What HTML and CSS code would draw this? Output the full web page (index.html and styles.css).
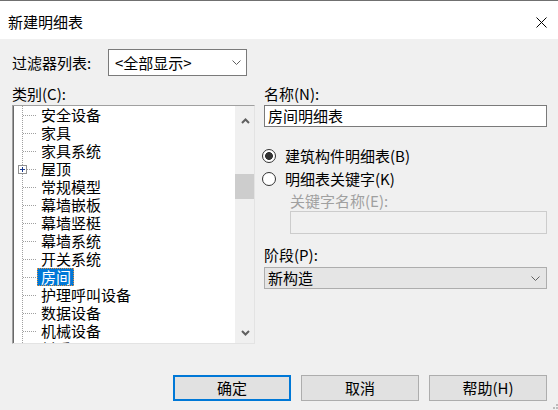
FILE: index.html
```html
<!DOCTYPE html>
<html lang="zh-CN">
<head>
<meta charset="utf-8">
<title>新建明细表</title>
<link rel="stylesheet" href="styles.css">
</head>
<body>
<div class="dialog">
  <div class="titlebar">
    <span class="title">新建明细表</span>
    <svg class="close" width="11" height="11" viewBox="0 0 11 11"><path d="M0.5 0.5 L10.5 10.5 M10.5 0.5 L0.5 10.5" stroke="#000" stroke-width="1" fill="none"/></svg>
  </div>
  <div class="body">
    <div class="filter-row">
      <span class="filter-label">过滤器列表:</span>
      <div class="combo">
        <span>&lt;全部显示&gt;</span>
        <svg class="chev" width="9" height="5" viewBox="0 0 9 5"><path d="M0.5 0.5 L4.5 4.5 L8.5 0.5" stroke="#606060" stroke-width="1" fill="none"/></svg>
      </div>
    </div>
    <div class="columns">
      <div class="left">
        <div class="label">类别(C):</div>
        <div class="list">
          <div class="tree">
            <div class="row"><span class="conn"></span><span class="text">安全设备</span></div>
            <div class="row"><span class="conn"></span><span class="text">家具</span></div>
            <div class="row"><span class="conn"></span><span class="text">家具系统</span></div>
            <div class="row"><span class="conn"><span class="plus"></span></span><span class="text">屋顶</span></div>
            <div class="row"><span class="conn"></span><span class="text">常规模型</span></div>
            <div class="row"><span class="conn"></span><span class="text">幕墙嵌板</span></div>
            <div class="row"><span class="conn"></span><span class="text">幕墙竖梃</span></div>
            <div class="row"><span class="conn"></span><span class="text">幕墙系统</span></div>
            <div class="row"><span class="conn"></span><span class="text">开关系统</span></div>
            <div class="row"><span class="conn"></span><span class="text selected">房间</span></div>
            <div class="row"><span class="conn"></span><span class="text">护理呼叫设备</span></div>
            <div class="row"><span class="conn"></span><span class="text">数据设备</span></div>
            <div class="row"><span class="conn"></span><span class="text">机械设备</span></div>
            <div class="row"><span class="conn"></span><span class="text">材质</span></div>
          </div>
          <div class="scrollbar">
            <div class="arrow up"><svg width="9" height="6" viewBox="0 0 9 6"><path d="M1 5 L4.5 1.5 L8 5" stroke="#606060" stroke-width="2" fill="none"/></svg></div>
            <div class="track"><div class="thumb"></div></div>
            <div class="arrow down"><svg width="9" height="6" viewBox="0 0 9 6"><path d="M1 1 L4.5 4.5 L8 1" stroke="#606060" stroke-width="2" fill="none"/></svg></div>
          </div>
        </div>
      </div>
      <div class="right">
        <div class="label">名称(N):</div>
        <div class="input">房间明细表</div>
        <div class="radios">
          <div class="radio-row"><span class="radio checked"></span><span>建筑构件明细表(B)</span></div>
          <div class="radio-row"><span class="radio"></span><span>明细表关键字(K)</span></div>
        </div>
        <div class="label disabled indent">关键字名称(E):</div>
        <div class="input disabled-input indent"></div>
        <div class="label phase-label">阶段(P):</div>
        <div class="select">
          <span>新构造</span>
          <svg class="chev" width="9" height="5" viewBox="0 0 9 5"><path d="M0.5 0.5 L4.5 4.5 L8.5 0.5" stroke="#606060" stroke-width="1" fill="none"/></svg>
        </div>
      </div>
    </div>
  </div>
  <div class="footer">
    <button class="btn default">确定</button>
    <button class="btn">取消</button>
    <button class="btn">帮助(H)</button>
    <svg class="grip" width="5" height="5" viewBox="0 0 5 5"><rect x="3" y="0" width="2" height="2" fill="#bcbcbc"/><rect x="0" y="3" width="2" height="2" fill="#bcbcbc"/><rect x="3" y="3" width="2" height="2" fill="#bcbcbc"/></svg>
  </div>
</div>
</body>
</html>
```
FILE: styles.css
```css
* { box-sizing: border-box; }
html, body { margin: 0; padding: 0; }
body {
  font-family: "Noto Sans CJK SC", "Noto Sans", sans-serif;
  font-size: 15px;
  color: #000;
  background: #f0f0f0;
}
.dialog {
  width: 558px;
  height: 410px;
  display: flex;
  flex-direction: column;
  background: #f0f0f0;
  position: relative;
}
.titlebar {
  height: 39px;
  border-top: 1px solid #707070;
  background: #fff;
  display: flex;
  align-items: center;
  justify-content: space-between;
  padding: 4px 11px 0 8px;
}
.title { line-height: 20px; }
.body {
  padding: 10px 11px 0 12px;
}
.filter-row {
  display: flex;
  align-items: center;
  height: 27px;
}
.filter-label {
  width: 96px;
  line-height: 20px;
}
.combo {
  width: 139px;
  height: 27px;
  border: 1px solid #7a7a7a;
  background: #fff;
  display: flex;
  align-items: center;
  justify-content: space-between;
  padding: 0 5px 0 6px;
}
.columns {
  display: flex;
  gap: 9px;
  margin-top: 7px;
}
.left { width: 243px; }
.right { width: 283px; }
.label { line-height: 22px; height: 22px; }
.list {
  height: 239px;
  border: 1px solid;
  border-color: #a0a0a0 #e3e3e3 #e3e3e3 #a0a0a0;
  box-shadow: inset 1px 0 0 #696969;
  background: #fff;
  display: flex;
}
.tree {
  flex: 1;
  overflow: hidden;
}
.row {
  display: flex;
  height: 18px;
  line-height: 18px;
  white-space: nowrap;
}
.conn {
  width: 24px;
  flex: none;
  display: flex;
  align-items: center;
  background-image:
    repeating-linear-gradient(to bottom, #a0a0a0 0 1px, transparent 1px 2px),
    repeating-linear-gradient(to right, #a0a0a0 0 1px, transparent 1px 2px);
  background-size: 1px 100%, 14px 1px;
  background-position: 9px 0, 10px 9px;
  background-repeat: no-repeat;
}
.plus {
  width: 9px;
  height: 9px;
  margin-left: 5px;
  border: 1px solid #919191;
  background:
    linear-gradient(#1b3a8c, #1b3a8c) center / 5px 1px no-repeat,
    linear-gradient(#1b3a8c, #1b3a8c) center / 1px 5px no-repeat,
    #fff;
}
.text {
  padding: 0 3px 0 4px;
}
.text.selected {
  background: #0078d7;
  color: #fff;
  outline: 1px dotted #e09040;
  outline-offset: -1px;
}
.scrollbar {
  width: 19px;
  flex: none;
  background: #f0f0f0;
  display: flex;
  flex-direction: column;
}
.arrow {
  display: flex;
  align-items: center;
  justify-content: center;
  padding-left: 1px;
}
.arrow.up { height: 30px; }
.arrow.down { height: 20px; }
.track { flex: 1; }
.thumb {
  margin-top: 38px;
  height: 25px;
  background: #cdcdcd;
}
.input {
  height: 22px;
  border: 1px solid #7a7a7a;
  background: #fff;
  line-height: 20px;
  padding-left: 3px;
}
.radios {
  margin-top: 17px;
}
.radio-row {
  height: 23px;
  display: flex;
  align-items: center;
  gap: 9px;
  margin-left: -2px;
  line-height: 20px;
}
.radio {
  width: 14px;
  height: 14px;
  border: 1px solid #333;
  border-radius: 50%;
  background: #fff;
  flex: none;
}
.radio.checked {
  background: radial-gradient(circle, #333 0 3.6px, #fff 4.2px);
}
.indent { margin-left: 26px; }
.label.disabled {
  color: #a0a0a0;
  line-height: 21px;
  height: 21px;
}
.disabled-input {
  height: 23px;
  border-color: #cccccc;
  background: #f0f0f0;
}
.phase-label { margin-top: 10px; }
.select {
  margin-top: 1px;
  height: 22px;
  border: 1px solid #adadad;
  background: #e5e5e5;
  display: flex;
  align-items: center;
  justify-content: space-between;
  padding: 0 6px 0 3px;
  line-height: 20px;
}
.footer {
  margin-top: auto;
  display: flex;
  justify-content: flex-end;
  gap: 10px;
  padding: 0 11px 9px 0;
}
.btn {
  width: 118px;
  height: 26px;
  border: 1px solid #adadad;
  background: #e1e1e1;
  font-family: inherit;
  font-size: 15px;
  color: #000;
  padding: 0;
  line-height: 20px;
}
.btn.default {
  border: 2px solid #0078d7;
}
.grip {
  position: absolute;
  right: 0;
  bottom: 1px;
}
```
